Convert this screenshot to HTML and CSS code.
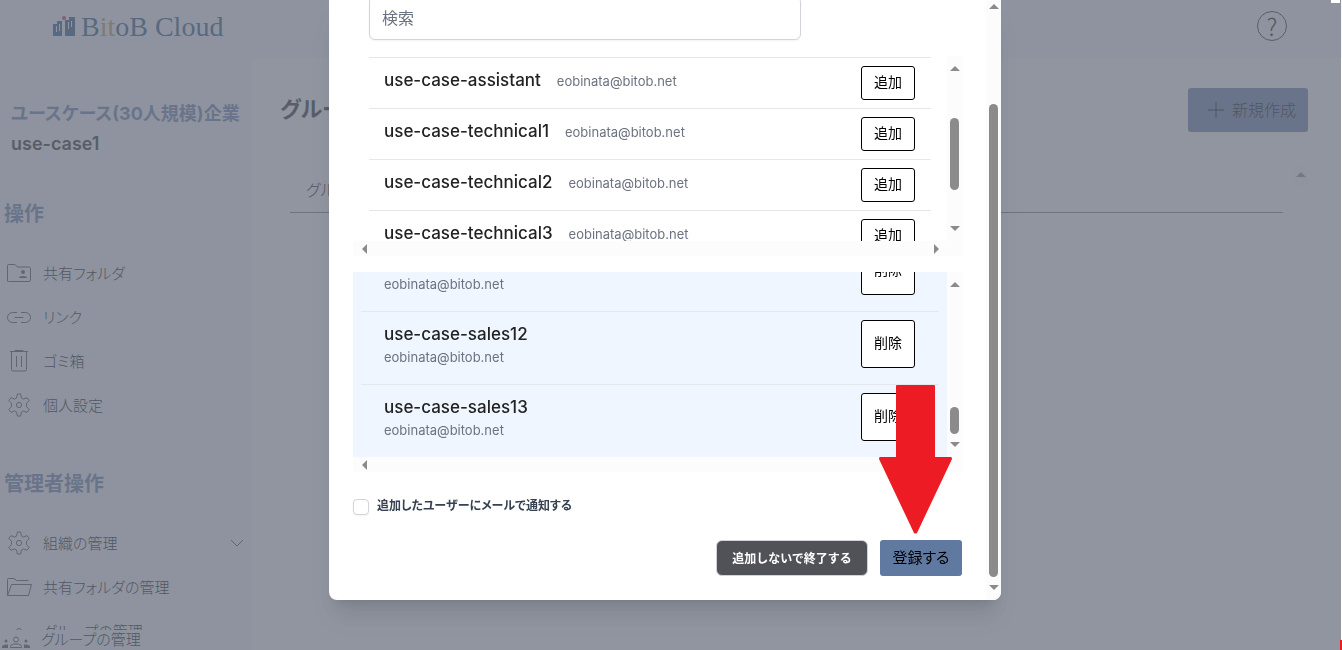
FILE: index.html
```html
<!DOCTYPE html>
<html lang="ja">
<head>
    <meta charset="UTF-8">
    <meta name="viewport" content="width=device-width, initial-scale=1.0">
    <title>BitoB Cloud</title>
    <link rel="stylesheet" href="styles.css">
</head>
<body>
    <svg width="0" height="0" class="sprite" aria-hidden="true">
        <symbol id="gear" viewBox="0 0 24 24">
            <path d="M10.300 1h3.400l.7 4 2 1.100 3.600-1.500 2.200 3-2.700 2.700v3.400l2.700 2.700-2.200 3-3.600-1.500-2 1.100-.7 4h-3.400l-.7-4-2-1.100L4 19.400l-2.200-3 2.700-2.700v-3.400L1.800 7.600 4 4.600l3.600 1.500 2-1.100z"/>
            <circle cx="12" cy="12" r="2.600"/>
        </symbol>
    </svg>

    <header class="header">
        <a href="#" class="logo">
            <svg class="logo-mark" viewBox="0 0 22 20">
                <path fill="#205080" d="M0 8h4V5h5v15H0zM12 4h4V1h6v19H12z"/>
                <path stroke="#f7f8fc" d="M3.500 10v6M6.500 8v7M15.500 6v7M18.500 5v6"/>
                <circle fill="#c0304a" cx="11" cy="2" r="2"/>
            </svg>
            <span>B<i class="logo-i">i</i><i class="logo-t">t</i>oB Cloud</span>
        </a>
        <button type="button" class="help" aria-label="ヘルプ">?</button>
    </header>

    <div class="page">
        <aside class="sidebar">
            <div class="menu">
                <div class="company">ユースケース(30人規模)企業</div>
                <div class="user">use-case1</div>

                <h2 class="menu-title">操作</h2>
                <nav class="menu-list">
                    <a href="#"><svg class="icon" viewBox="0 0 26 24"><path d="M1.500 20V4.500Q1.500 3.500 2.500 3.500H9L11.500 6H23Q24.500 6 24.500 7.500V19Q24.500 20.500 23 20.500H2.500Q1.500 20.500 1.500 20z"/><circle class="solid" cx="17" cy="11" r="2"/><path class="solid" d="M13 17q0-2 4-2t4 2z"/></svg><span>共有フォルダ</span></a>
                    <a href="#"><svg class="icon" viewBox="0 0 26 24"><path d="M11 7.500H6.500a5 5 0 0 0 0 10H11M15 7.500h4.500a5 5 0 0 1 0 10H15M8.500 12.500h9"/></svg><span>リンク</span></a>
                    <a href="#"><svg class="icon" viewBox="0 0 26 24"><path d="M4 2.500h18M9 2.500V1.500h8v1M5.500 2.500v18q0 1.500 1.500 1.500h12q1.500 0 1.500-1.500v-18M10.500 7v11M15.500 7v11"/></svg><span>ゴミ箱</span></a>
                    <a href="#"><svg class="icon"><use href="#gear"/></svg><span>個人設定</span></a>
                </nav>

                <h2 class="menu-title">管理者操作</h2>
                <nav class="menu-list">
                    <a href="#"><svg class="icon"><use href="#gear"/></svg><span>組織の管理</span><svg class="chevron" viewBox="0 0 14 8"><path d="M1 1l6 6 6-6"/></svg></a>
                    <a href="#"><svg class="icon" viewBox="0 0 26 24"><path d="M1.500 20.500V4.500Q1.500 3.500 2.500 3.500H8L10.500 5.500H22.500M1.500 20.500L5.500 9.500H25.500L22.500 20.500H1.500"/></svg><span>共有フォルダの管理</span></a>
                    <a href="#"><svg class="icon" viewBox="0 0 26 24"><circle cx="13" cy="12" r="2.500"/></svg><span>グループの管理</span></a>
                </nav>
            </div>
            <a href="#" class="menu-bottom"><svg class="people" viewBox="0 0 28 12"><circle cx="14" cy="3.500" r="2.500"/><path d="M8.500 11.500v-1q0-2.500 5.500-2.500t5.500 2.500v1z"/><circle class="solid" cx="4" cy="5" r="1.500"/><circle class="solid" cx="24" cy="5" r="1.500"/><path class="solid" d="M0 12v-2q2-2 6-1.500V12zM28 12v-2q-2-2-6-1.500V12z"/></svg>グループの管理</a>
        </aside>

        <main class="main">
            <div class="main-head">
                <h1>グループ</h1>
                <button type="button" class="create"><svg viewBox="0 0 16 16"><path d="M8 0v16M0 8h16"/></svg>新規作成</button>
            </div>
            <div class="main-body">
                <table class="groups">
                    <thead><tr><th>グループ</th></tr></thead>
                </table>
                <div class="scroll scroll-page"><span class="arrow up"></span></div>
            </div>
        </main>
    </div>

    <div class="overlay">
        <div class="modal" role="dialog" aria-label="ユーザーの追加">
            <div class="modal-content">
                <input type="text" class="search" placeholder="検索" aria-label="検索">

                <div class="list">
                    <ul class="users users-add">
                        <li><span class="name">use-case-assistant</span><span class="mail">eobinata@bitob.net</span><button type="button">追加</button></li>
                        <li><span class="name">use-case-technical1</span><span class="mail">eobinata@bitob.net</span><button type="button">追加</button></li>
                        <li><span class="name">use-case-technical2</span><span class="mail">eobinata@bitob.net</span><button type="button">追加</button></li>
                        <li><span class="name">use-case-technical3</span><span class="mail">eobinata@bitob.net</span><button type="button">追加</button></li>
                    </ul>
                    <div class="scroll"><span class="arrow up"></span><span class="thumb thumb-add"></span><span class="arrow down"></span></div>
                    <div class="scroll-x"><span class="arrow left"></span><span class="arrow right"></span></div>
                </div>

                <div class="list">
                    <ul class="users users-remove">
                        <li><div><div class="name">use-case-sales11</div><div class="mail">eobinata@bitob.net</div></div><button type="button">削除</button></li>
                        <li><div><div class="name">use-case-sales12</div><div class="mail">eobinata@bitob.net</div></div><button type="button">削除</button></li>
                        <li><div><div class="name">use-case-sales13</div><div class="mail">eobinata@bitob.net</div></div><button type="button">削除</button></li>
                    </ul>
                    <div class="scroll"><span class="arrow up"></span><span class="thumb thumb-remove"></span><span class="arrow down"></span></div>
                    <div class="scroll-x"><span class="arrow left"></span></div>
                </div>

                <div class="notify">
                    <input type="checkbox" id="notify">
                    <label for="notify">追加したユーザーにメールで通知する</label>
                </div>

                <div class="actions">
                    <button type="button" class="cancel">追加しないで終了する</button>
                    <button type="submit" class="submit">登録する</button>
                </div>
            </div>
            <div class="scroll scroll-modal"><span class="arrow up"></span><span class="thumb thumb-modal"></span><span class="arrow down"></span></div>

            <svg class="pointer" viewBox="0 0 73 149"><path d="M17 1q0-1 1-1h37q1 0 1 1v71h16q1 0 1 2L38 148q-1 1-3 0L0 74q0-2 1-2h16z"/></svg>
        </div>
    </div>
    <span class="corner"></span>
    <span class="mark"></span>
</body>
</html>
```
FILE: styles.css
```css
* {
    box-sizing: border-box;
}

body {
    margin: 0;
    height: 100vh;
    overflow: hidden;
    display: flex;
    flex-direction: column;
    font-family: Inter, "Noto Sans CJK JP", sans-serif;
    font-size: 16px;
    font-feature-settings: "palt";
    color: #000;
    background: #f7f8fc;
}

a {
    color: inherit;
    text-decoration: none;
}

button,
input {
    font: inherit;
    font-feature-settings: inherit;
    color: inherit;
}

.sprite {
    position: absolute;
}

.header {
    flex: none;
    height: 58px;
    display: flex;
    justify-content: space-between;
    padding: 11px 55px 0 53px;
}

.logo {
    display: flex;
    gap: 6px;
    font: 28px/32px "Liberation Serif", serif;
    color: #205080;
}

.logo-mark {
    width: 22px;
    height: 20px;
    margin-top: 5px;
    fill: none;
}

.logo i {
    font-style: normal;
}

.logo-i,
.logo-t {
    color: #b09a40;
}

.help {
    width: 30px;
    height: 30px;
    padding: 0;
    border: 1px solid #222;
    border-radius: 50%;
    background: none;
    font: 300 24px/28px "Noto Sans CJK JP", sans-serif;
}

.page {
    flex: 1;
    min-height: 0;
    display: flex;
}

/* sidebar */

.sidebar {
    flex: none;
    width: 252px;
    display: flex;
    flex-direction: column;
}

.menu {
    flex: 1;
    min-height: 0;
    padding-top: 41px;
    overflow: hidden;
}

.company,
.user {
    padding-left: 11px;
    font-size: 18px;
    line-height: 30px;
    white-space: nowrap;
}

.company {
    font-weight: bold;
    color: #647ea8;
}

.user {
    font-weight: 600;
    color: #222;
}

.menu-title {
    margin: 40px 0 21px;
    padding-left: 4px;
    font-size: 20px;
    line-height: 30px;
    color: #647ea8;
}

.menu-list {
    padding-bottom: 3px;
}

.menu-list a {
    height: 44px;
    display: flex;
    align-items: center;
    gap: 11px;
    padding: 0 8px 0 6px;
    font-size: 15px;
    font-weight: 300;
}

.icon,
.people,
.chevron {
    flex: none;
    fill: none;
    stroke: #444;
}

.icon {
    width: 26px;
    height: 24px;
    margin-top: 2px;
}

.solid {
    fill: #444;
    stroke: none;
}

.people {
    width: 28px;
    height: 12px;
    margin-top: 3px;
}

.chevron {
    width: 14px;
    height: 8px;
    margin: 2px 0 0 auto;
}

.menu-bottom {
    flex: none;
    height: 20px;
    display: flex;
    align-items: center;
    gap: 11px;
    padding-left: 2px;
    font-size: 15px;
    font-weight: 300;
    line-height: 20px;
}

/* main */

.main {
    flex: 1;
    display: flex;
    flex-direction: column;
    padding: 30px 34px 0 28px;
    background: #fff;
}

.main-head {
    display: flex;
    justify-content: space-between;
}

h1 {
    margin: 5px 0 0;
    font-size: 22px;
    line-height: 32px;
    color: #222;
}

.create {
    width: 120px;
    height: 44px;
    display: flex;
    align-items: center;
    justify-content: flex-end;
    gap: 8px;
    padding: 0 12px 2px;
    border: 0;
    border-radius: 3px;
    background: #647ea8;
    font-weight: 300;
}

.create svg {
    width: 16px;
    height: 16px;
    margin-top: 2px;
    stroke: #000;
}

.main-body {
    flex: 1;
    display: flex;
    align-items: flex-start;
    gap: 10px;
    padding: 34px 0 0 10px;
}

.groups {
    flex: 1;
    border-collapse: collapse;
}

.groups th {
    height: 46px;
    padding: 2px 16px;
    border-bottom: 1px solid #777;
    text-align: left;
    font-weight: 300;
}

/* scrollbars */

.scroll {
    width: 15px;
    display: flex;
    flex-direction: column;
    align-items: center;
    padding: 10px 0;
    background: #fcfcfc;
}

.scroll .down {
    margin-top: auto;
}

.scroll-page {
    padding-top: 6px;
}

.scroll-x {
    grid-column: span 2;
    display: flex;
    align-items: center;
    justify-content: space-between;
    padding: 0 23px 0 9px;
    background: #fcfcfc;
}

.arrow {
    border: 5px solid transparent;
}

.up {
    border-top: 0;
    border-bottom-color: #8b8b8b;
}

.down {
    border-bottom: 0;
    border-top-color: #8b8b8b;
}

.left {
    border-left: 0;
    border-right-color: #8b8b8b;
}

.right {
    border-right: 0;
    border-left-color: #8b8b8b;
}

.thumb {
    width: 9px;
    border-radius: 5px;
    background: #8b8b8b;
}

.thumb-add {
    height: 72px;
    margin-top: 47px;
}

.thumb-remove {
    height: 27px;
    margin: auto 0 8px;
}

.scroll .thumb-remove + .down {
    margin-top: 0;
}

.thumb-modal {
    flex: 1;
    margin: 95px 0 8px;
}

/* modal */

.overlay {
    position: fixed;
    inset: 0 1px 0 0;
    display: flex;
    justify-content: center;
    padding: 0 11px 50px 0;
    background: rgba(107, 114, 128, 0.75);
}

.modal {
    position: relative;
    width: 100%;
    max-width: 672px;
    display: flex;
    border-radius: 0 0 8px 8px;
    background: #fff;
    box-shadow: 0 20px 25px -5px rgba(0, 0, 0, 0.1), 0 8px 10px -6px rgba(0, 0, 0, 0.1);
}

.modal-content {
    flex: 1;
    min-width: 0;
    display: flex;
    flex-direction: column;
    justify-content: flex-end;
    gap: 16px;
    padding: 0 24px 24px;
}

.scroll-modal {
    padding: 4px 0 10px;
    border-radius: 0 0 8px 0;
}

.search {
    flex: none;
    width: 432px;
    height: 44px;
    margin-left: 16px;
    padding: 0 12px;
    border: 1px solid #d1d5db;
    border-radius: 6px;
    box-shadow: 0 1px 2px rgba(0, 0, 0, 0.05);
}

.search::placeholder {
    color: #6b7280;
}

.list {
    flex: none;
    display: grid;
    grid-template: 185px 15px / 1fr 15px;
}

.users {
    margin: 0;
    overflow: hidden;
    list-style: none;
}

.users li {
    display: flex;
    border-top: 1px solid #e5e7eb;
}

.users button {
    flex: none;
    width: 54px;
    margin-left: auto;
    padding: 0 0 2px;
    border: 1px solid #000;
    border-radius: 3px;
    background: #fff;
    color: #000;
    font-size: 14px;
}

.users-add {
    padding: 1px 16px 0;
}

.users-add li {
    height: 51px;
    gap: 16px;
    padding: 8px 16px 8px 15px;
    line-height: 28px;
}

.users-add .mail {
    padding-top: 1px;
}

.users-remove {
    display: flex;
    flex-direction: column;
    justify-content: flex-end;
    padding: 0 8px;
    background: #eff6ff;
}

.users-remove li {
    flex: none;
    height: 73px;
    padding: 8px 24px 16px 23px;
    line-height: 28px;
}

.users-remove .mail {
    line-height: 18px;
}

.name {
    font-size: 17px;
    font-weight: 500;
    color: #222;
}

.mail {
    font-size: 13px;
    color: #6b7280;
}

.notify {
    display: flex;
    align-items: center;
    gap: 8px;
    margin: 6px 0;
    font-size: 12px;
    line-height: 24px;
    font-weight: bold;
    color: #374151;
}

.notify input {
    appearance: none;
    width: 16px;
    height: 16px;
    margin: 2px 0 0;
    border: 1px solid #d1d5db;
    border-radius: 4px;
    background: #fff;
    box-shadow: 0 1px 2px rgba(0, 0, 0, 0.05);
}

.actions {
    display: flex;
    align-items: center;
    justify-content: flex-end;
    gap: 12px;
}

.cancel {
    width: 152px;
    height: 36px;
    padding: 0 0 2px;
    border: 1px solid #d1d5db;
    border-radius: 6px;
    background: #515158;
    color: #fff;
    font-size: 12px;
    font-weight: bold;
    font-feature-settings: normal;
}

.submit {
    width: 82px;
    height: 36px;
    padding: 0 0 3px;
    border: 0;
    border-radius: 3px;
    background: #6079a0;
    color: #000;
    font-size: 15px;
}

.pointer {
    position: absolute;
    right: 49px;
    bottom: 66px;
    width: 73px;
    height: 149px;
    fill: #ed1c24;
}

.corner {
    position: fixed;
    top: 0;
    right: 2px;
    width: 9px;
    height: 3px;
    background: #fff;
}

.mark {
    position: fixed;
    right: 0;
    bottom: 0;
    width: 2px;
    height: 10px;
    background: #ed1c24;
}
```
